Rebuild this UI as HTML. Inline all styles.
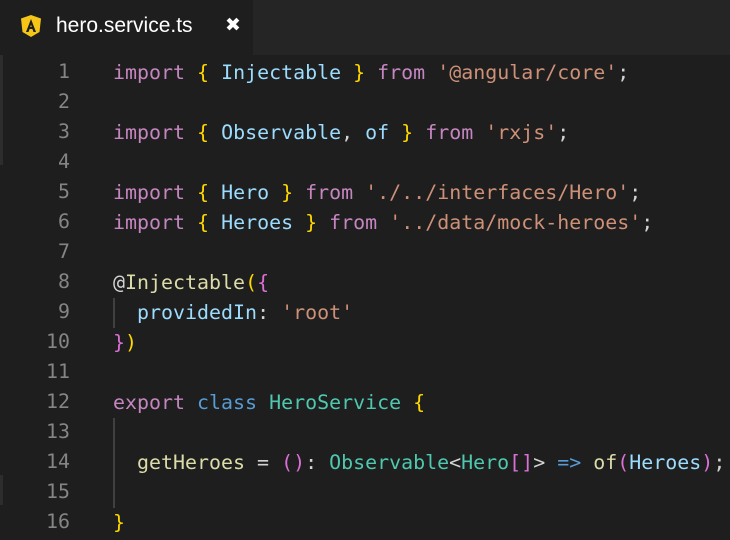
<!DOCTYPE html>
<html><head><meta charset="utf-8"><style>
html,body{margin:0;padding:0;width:730px;height:540px;overflow:hidden;background:#1e1e1e;}
.bar{position:absolute;left:0;top:0;width:730px;height:55px;background:#252526;}
.tab{position:absolute;left:0;top:0;width:253px;height:55px;background:#1e1e1e;}
.tab .name{position:absolute;left:56px;top:14px;font:21px "Liberation Sans",sans-serif;color:#fff;}
.tab .x{position:absolute;left:225px;top:14px;font:bold 19px "DejaVu Sans",sans-serif;color:#fff;}
.ln{position:absolute;left:0;width:70px;text-align:right;font:19.9px "DejaVu Sans Mono",monospace;color:#858585;}
.code{position:absolute;left:113px;font:19.95px "DejaVu Sans Mono",monospace;color:#d4d4d4;white-space:pre;}
.k{color:#c586c0}.y{color:#ffd700}.v{color:#9cdcfe}.s{color:#ce9178}.c{color:#4ec9b0}.f{color:#dcdcaa}.b{color:#569cd6}.p{color:#da70d6}
.guide{position:absolute;left:113px;width:2px;background:#404040;}
.strip{position:absolute;left:0;width:3px;background:#2d2d2d;}
</style></head><body>
<div class="bar"></div>
<div class="tab">
<svg style="position:absolute;left:20px;top:14px" width="22" height="24" viewBox="0 0 22 24"><path d="M11 1 L21 4.5 L19.5 18 L11 23 L2.5 18 L1 4.5 Z" fill="#f5c518"/><path d="M11 5 L6 18 H8.5 L9.6 15 H12.4 L13.5 18 H16 Z M10.3 13 L11 10.5 L11.7 13 Z" fill="#1e1e1e"/></svg>
<div class="name">hero.service.ts</div><div class="x">✖</div></div>
<div class="strip" style="top:55px;height:110px"></div>
<div class="strip" style="top:475px;height:30px"></div>
<div class="guide" style="top:298px;height:30px"></div>
<div class="guide" style="top:418px;height:90px"></div>
<div class="ln" style="top:60px">1</div><div class="code" style="top:60px"><span class="k">import</span> <span class="y">{</span> <span class="v">Injectable</span> <span class="y">}</span> <span class="k">from</span> <span class="s">'@angular/core'</span>;</div>
<div class="ln" style="top:90px">2</div>
<div class="ln" style="top:120px">3</div><div class="code" style="top:120px"><span class="k">import</span> <span class="y">{</span> <span class="v">Observable</span>, <span class="v">of</span> <span class="y">}</span> <span class="k">from</span> <span class="s">'rxjs'</span>;</div>
<div class="ln" style="top:150px">4</div>
<div class="ln" style="top:180px">5</div><div class="code" style="top:180px"><span class="k">import</span> <span class="y">{</span> <span class="v">Hero</span> <span class="y">}</span> <span class="k">from</span> <span class="s">'./../interfaces/Hero'</span>;</div>
<div class="ln" style="top:210px">6</div><div class="code" style="top:210px"><span class="k">import</span> <span class="y">{</span> <span class="v">Heroes</span> <span class="y">}</span> <span class="k">from</span> <span class="s">'../data/mock-heroes'</span>;</div>
<div class="ln" style="top:240px">7</div>
<div class="ln" style="top:270px">8</div><div class="code" style="top:270px">@<span class="f">Injectable</span><span class="y">(</span><span class="p">{</span></div>
<div class="ln" style="top:300px">9</div><div class="code" style="top:300px">  <span class="v">providedIn</span>: <span class="s">'root'</span></div>
<div class="ln" style="top:330px">10</div><div class="code" style="top:330px"><span class="p">}</span><span class="y">)</span></div>
<div class="ln" style="top:360px">11</div>
<div class="ln" style="top:390px">12</div><div class="code" style="top:390px"><span class="k">export</span> <span class="b">class</span> <span class="c">HeroService</span> <span class="y">{</span></div>
<div class="ln" style="top:420px">13</div>
<div class="ln" style="top:450px">14</div><div class="code" style="top:450px">  <span class="f">getHeroes</span> = <span class="p">()</span>: <span class="c">Observable</span>&lt;<span class="c">Hero</span><span class="p">[]</span>&gt; <span class="b">=&gt;</span> <span class="f">of</span><span class="p">(</span><span class="v">Heroes</span><span class="p">)</span>;</div>
<div class="ln" style="top:480px">15</div>
<div class="ln" style="top:510px">16</div><div class="code" style="top:510px"><span class="y">}</span></div>
</body></html>
